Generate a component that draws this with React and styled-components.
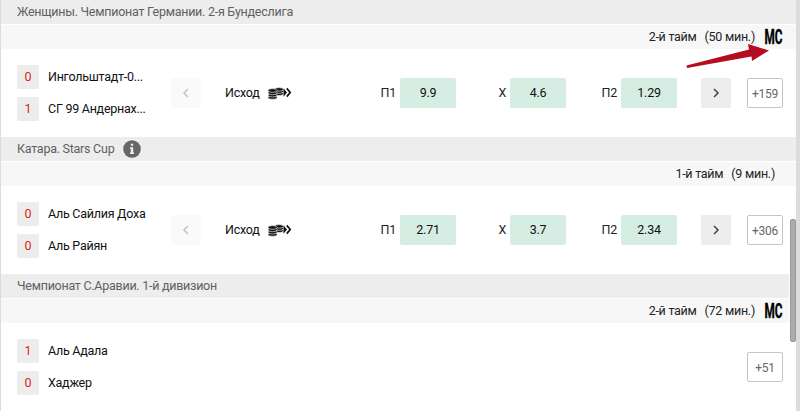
import React from 'react';
import styled, { createGlobalStyle } from 'styled-components';

// --- STYLES ---
const GlobalStyle = createGlobalStyle`
  * { box-sizing: border-box; }
  body {
    margin: 0;
    overflow: hidden;
    background: #fff;
    font-family: Roboto, sans-serif;
    font-size: 12.5px;
    letter-spacing: -0.26px;
  }
  button {
    font-family: inherit;
    letter-spacing: inherit;
    padding: 0;
    cursor: pointer;
  }
`;

const Page = styled.div`
  position: relative;
  width: 800px;
  height: 411px;
  overflow: hidden;
  background: #fff;
  border-left: 1px solid #dcdcdc;
  border-right: 4px solid #dcdcdc;
`;

const LeagueHeader = styled.div`
  display: flex;
  align-items: center;
  gap: 9px;
  height: 24px;
  padding: 0 16px 1px;
  background: #ededed;
  color: #5f5f5f;
  line-height: 20px;
  white-space: nowrap;
`;

const InfoIcon = styled.svg`
  width: 18px;
  height: 18px;
`;

const StatusBar = styled.div`
  display: flex;
  align-items: center;
  justify-content: flex-end;
  height: 25px;
  padding-right: 12px;
  border-top: 1px solid #fff;
  background: #f7f7f7;
  color: #222;
`;

const Period = styled.span`
  margin-right: 8px;
  padding-bottom: 2px;
`;

const Minutes = styled.span`
  margin-right: 9px;
  padding-bottom: 2px;
`;

const CenterLogo = styled.svg`
  width: 20px;
  height: 18px;
  overflow: visible;
`;

const EventRow = styled.div`
  display: flex;
  align-items: center;
  height: 88px;
  padding: 0 13px 0 16px;
`;

const Teams = styled.div`
  display: flex;
  flex-direction: column;
  gap: 8px;
  width: 154px;
`;

const Team = styled.div`
  display: flex;
  align-items: center;
  gap: 9px;
  color: #111;
  white-space: nowrap;
`;

const Score = styled.div`
  width: 22px;
  height: 24px;
  border-radius: 2px;
  background: #ededed;
  color: #dc2418;
  line-height: 24px;
  text-align: center;
`;

const TeamName = styled.span`
  padding-bottom: 2px;
`;

const Arrow = styled.button`
  display: flex;
  align-items: center;
  justify-content: center;
  width: 30px;
  height: 30px;
  border: none;
  border-radius: 2px;
  background: ${(p) => (p.disabled ? '#fafafa' : '#ededed')};
  color: ${(p) => (p.disabled ? '#c2c2c2' : '#444')};
`;

const Market = styled.div`
  display: flex;
  align-items: center;
  gap: 8px;
  width: 131px;
  margin-left: 24px;
  color: #111;
  line-height: 16px;
`;

const MarketName = styled.span`
  width: 35px;
  padding-bottom: 1px;
`;

const Coins = styled.svg`
  width: 25px;
  height: 14px;
`;

const Outcomes = styled.div`
  display: grid;
  grid-template-columns: 100px 110px 111px;
`;

const Outcome = styled.div`
  display: flex;
  align-items: center;
  justify-content: flex-end;
  gap: 4px;
  color: #222;
`;

const OutcomeLabel = styled.span`
  padding-bottom: 2px;
`;

const Odds = styled.button`
  flex: none;
  width: 56px;
  height: 30px;
  padding-bottom: 1px;
  border: none;
  border-radius: 2px;
  background: #d6ede4;
  color: #111;
  font-size: 12.5px;
`;

const More = styled.button`
  width: 36px;
  height: 30px;
  margin-left: auto;
  padding-top: 1px;
  border: 1px solid #c4c4c4;
  border-radius: 2px;
  background: #fff;
  color: #666;
  font-size: 12px;
`;

const NextSlot = styled.div`
  margin-left: 24px;
`;

const ScrollThumb = styled.div`
  position: absolute;
  top: 219px;
  right: 0;
  width: 6px;
  height: 123px;
  border-radius: 2px;
  border: 1px solid #989898;
  background: #acacac;
  box-shadow: 0 0 0 1px #fff;
`;

const Pointer = styled.svg`
  position: absolute;
  top: 40px;
  left: 682px;
  width: 90px;
  height: 30px;
`;

// --- DATA ---
const events = [
  {
    league: 'Женщины. Чемпионат Германии. 2-я Бундеслига',
    period: '2-й тайм',
    minutes: '(50 мин.)',
    center: true,
    teams: [['0', 'Ингольштадт-0...'], ['1', 'СГ 99 Андернах...']],
    odds: [['П1', '9.9'], ['X', '4.6'], ['П2', '1.29']],
    more: '+159',
  },
  {
    league: 'Катара. Stars Cup',
    info: true,
    period: '1-й тайм',
    minutes: '(9 мин.)',
    teams: [['0', 'Аль Сайлия Доха'], ['0', 'Аль Райян']],
    odds: [['П1', '2.71'], ['X', '3.7'], ['П2', '2.34']],
    more: '+306',
  },
  {
    league: 'Чемпионат С.Аравии. 1-й дивизион',
    period: '2-й тайм',
    minutes: '(72 мин.)',
    center: true,
    teams: [['1', 'Аль Адала'], ['0', 'Хаджер']],
    more: '+51',
  },
];

const Chevron = ({ left }) => (
  <svg width="8" height="12" viewBox="0 0 8 12" fill="none" stroke="currentColor" strokeWidth="1.5">
    <path d={left ? 'M6 2 2 6l4 4' : 'M2 2l4 4-4 4'} />
  </svg>
);

const CoinsIcon = () => (
  <Coins viewBox="0 0 25 14">
    <g fill="#151515" stroke="#fff" strokeWidth=".6">
      <ellipse cx="11" cy="7.8" rx="4.3" ry="1.8" />
      <ellipse cx="11" cy="5.6" rx="4.3" ry="1.8" />
      <ellipse cx="11" cy="3.4" rx="4.3" ry="1.8" />
      <ellipse cx="4.6" cy="11.4" rx="4.5" ry="1.9" />
      <ellipse cx="4.6" cy="9.1" rx="4.5" ry="1.9" />
      <ellipse cx="4.6" cy="6.8" rx="4.5" ry="1.9" />
      <ellipse cx="4.6" cy="4.5" rx="4.5" ry="1.9" />
    </g>
    <path d="M15.5 2.3 19 6.5 15.5 10.8z" fill="#111" />
    <path d="M18.8 2.4 22.2 6.5 18.8 10.6" fill="none" stroke="#111" strokeWidth="1.7" />
  </Coins>
);

function Event({ event }) {
  return (
    <>
      <LeagueHeader>
        <span>{event.league}</span>
        {event.info && (
          <InfoIcon viewBox="0 0 18 18">
            <circle cx="9" cy="9" r="8.8" fill="#666" />
            <path d="M7.8 3.8h2.4v2H7.8zM7 7.3h3.2v5.2H11V14H7v-1.5h.8V8.8H7z" fill="#eee" />
          </InfoIcon>
        )}
      </LeagueHeader>
      <StatusBar>
        <Period>{event.period}</Period>
        <Minutes>{event.minutes}</Minutes>
        {event.center && (
          <CenterLogo viewBox="0 0 20 18">
            <text
              x="0.5"
              y="15.7"
              textLength="18"
              lengthAdjust="spacingAndGlyphs"
              fontFamily="Roboto, sans-serif"
              fontSize="19.5"
              fontWeight="700"
              letterSpacing="0"
              fill="#000"
              stroke="#000"
              strokeWidth=".4"
            >
              МС
            </text>
          </CenterLogo>
        )}
      </StatusBar>
      <EventRow>
        <Teams>
          {event.teams.map(([score, name]) => (
            <Team key={name}>
              <Score>{score}</Score>
              <TeamName>{name}</TeamName>
            </Team>
          ))}
        </Teams>
        {event.odds && (
          <>
            <Arrow disabled><Chevron left /></Arrow>
            <Market>
              <MarketName>Исход</MarketName>
              <CoinsIcon />
            </Market>
            <Outcomes>
              {event.odds.map(([label, value]) => (
                <Outcome key={label}>
                  <OutcomeLabel>{label}</OutcomeLabel>
                  <Odds>{value}</Odds>
                </Outcome>
              ))}
            </Outcomes>
            <NextSlot>
              <Arrow><Chevron /></Arrow>
            </NextSlot>
          </>
        )}
        <More>{event.more}</More>
      </EventRow>
    </>
  );
}

function App() {
  return (
    <>
      <GlobalStyle />
      <Page>
        {events.map((event) => (
          <Event key={event.league} event={event} />
        ))}
        <Pointer viewBox="0 0 90 30">
          <path d="M3.5 25.5 66 9.5 65 4 86 10.5 69 21 68.5 16.5 4 28z" fill="#b50d20" />
        </Pointer>
        <ScrollThumb />
      </Page>
    </>
  );
}

export default App;
